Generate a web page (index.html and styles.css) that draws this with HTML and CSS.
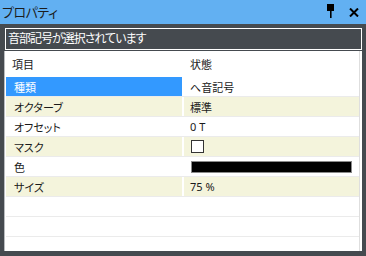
FILE: index.html
```html
<!DOCTYPE html>
<html lang="ja">
<head>
<meta charset="utf-8">
<link rel="stylesheet" href="styles.css">
</head>
<body>
<div class="window">
  <div class="titlebar">
    <span class="title">プロパティ</span>
    <span class="tools">
      <svg class="pin" width="9" height="16" viewBox="0 0 9 16"><rect x="1" y="0" width="7" height="7" fill="#000"/><rect x="4" y="7" width="1.6" height="7" fill="#000"/></svg>
      <svg class="close" width="10" height="9" viewBox="0 0 10 9"><path d="M1 0.5 L9 8.5 M9 0.5 L1 8.5" stroke="#000" stroke-width="2"/></svg>
    </span>
  </div>
  <div class="status">音部記号が選択されています</div>
  <div class="grid">
    <div class="table">
      <div class="row head"><div class="c1">項目</div><div class="c2">状態</div></div>
      <div class="row sel"><div class="c1">種類</div><div class="c2">へ音記号</div></div>
      <div class="row alt"><div class="c1">オクターブ</div><div class="c2">標準</div></div>
      <div class="row"><div class="c1">オフセット</div><div class="c2 lat">0 T</div></div>
      <div class="row alt"><div class="c1">マスク</div><div class="c2"><span class="check"></span></div></div>
      <div class="row"><div class="c1">色</div><div class="c2"><span class="swatch"></span></div></div>
      <div class="row alt"><div class="c1">サイズ</div><div class="c2 lat">75 %</div></div>
      <div class="row"><div class="c1"></div><div class="c2"></div></div>
      <div class="row"><div class="c1"></div><div class="c2"></div></div>
      <div class="row"><div class="c1"></div><div class="c2"></div></div>
    </div>
    <div class="vline"></div>
  </div>
</div>
</body>
</html>
```

FILE: styles.css
```css
html, body {
  margin: 0;
  padding: 0;
  background: #454a4f;
}
body {
  width: 366px;
  height: 256px;
  overflow: hidden;
  font-family: "Noto Sans CJK JP", "Noto Sans", sans-serif;
  font-feature-settings: "palt";
  color: #1a1a1a;
}
.window {
  display: flex;
  flex-direction: column;
  height: 256px;
}
.titlebar {
  height: 24px;
  background: #62b0f2;
  display: flex;
  align-items: center;
  justify-content: space-between;
  padding: 0 7px 0 2px;
}
.title {
  font-size: 13px;
  line-height: 24px;
  color: #1c1c1c;
  letter-spacing: -0.5px;
}
.tools {
  display: flex;
  align-items: flex-start;
  gap: 14px;
  height: 24px;
}
.pin {
  margin-top: 4px;
  display: block;
}
.close {
  margin-top: 8px;
  display: block;
}
.status {
  margin: 4px 4px 0 5px;
  height: 20px;
  border: 1px solid #ffffff;
  color: #ffffff;
  font-size: 12px;
  line-height: 18px;
  padding-left: 2px;
  letter-spacing: -1px;
  white-space: nowrap;
}
.grid {
  margin: 1px 4px 0 4px;
  height: 200px;
  background: #ffffff;
  border-left: 1px solid #b9bcbf;
  padding-left: 1px;
  padding-right: 2px;
  display: flex;
  overflow: hidden;
}
.table {
  flex: 1;
  display: flex;
  flex-direction: column;
}
.vline {
  width: 1px;
  background: #dedede;
}
.row {
  display: grid;
  grid-template-columns: 176px 175px;
  column-gap: 2px;
  height: 20px;
  border-bottom: 1px solid #ebebeb;
  box-sizing: border-box;
  flex: none;
  font-size: 11px;
}
.row > div {
  display: flex;
  align-items: center;
  white-space: nowrap;
}
.c1 { padding-left: 8px; }
.c2 { padding-left: 6px; }
.head {
  height: 26px;
  border-bottom: none;
}
.head .c1 { padding-left: 6px; }
.sel .c1 {
  background: #3399ff;
  color: #ffffff;
}
.alt .c1, .alt .c2 {
  background: #f4f4dc;
}
.lat {
  font-family: "Noto Sans", sans-serif;
}
.check {
  display: block;
  width: 11px;
  height: 11px;
  border: 1px solid #333;
  background: #fff;
  margin-left: 1px;
}
.swatch {
  display: block;
  width: 159px;
  height: 10px;
  border: 1px solid #8a8a8a;
  background: #000;
  margin-left: 1px;
}
```
